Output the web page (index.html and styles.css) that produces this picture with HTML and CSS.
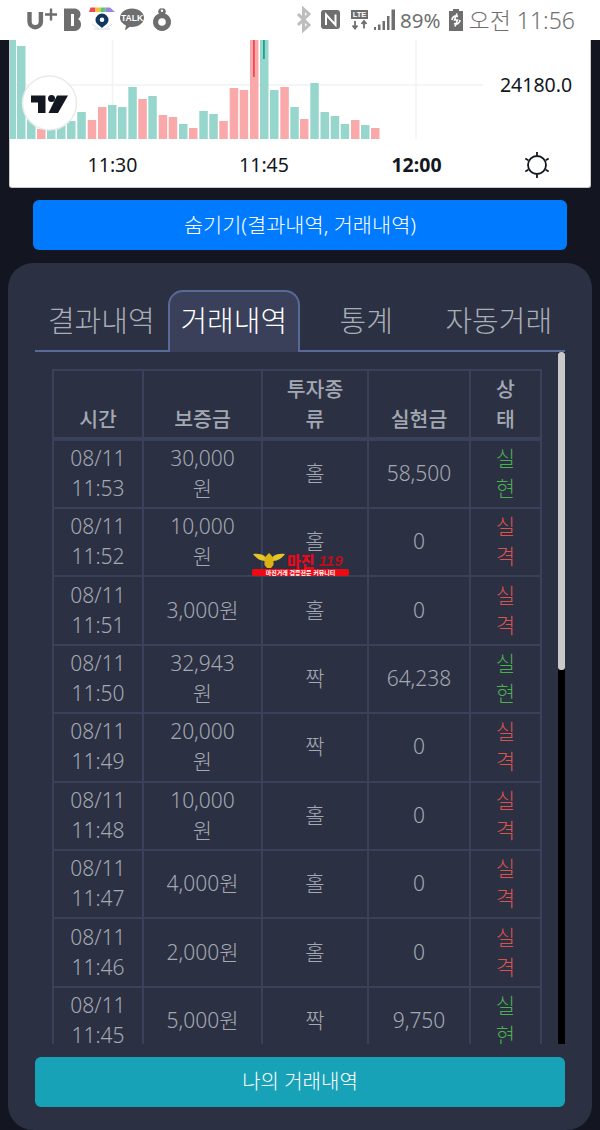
FILE: index.html
```html
<!DOCTYPE html>
<html lang="ko">
<head>
<meta charset="utf-8">
<title>거래내역</title>
<link rel="stylesheet" href="styles.css">
</head>
<body>
<div class="page">
  <header class="status">
    <div class="status-left">
      <svg class="status-icons" viewBox="0 0 180 40" width="180" height="40">
        <path class="ink-stroke" d="M29.5 12v9.5a5.7 5.7 0 0 0 11.4 0V12" />
        <path class="ink-thin" d="M45 14.5h12M51 8.500v12" />
        <path class="ink" d="M64 8.500h10c4 0 6.500 2.500 6.500 5.500 0 2.500-1 4-2.500 5 2 1 3 3 3 5.500 0 4-3 6.500-7 6.500H64z" />
        <rect class="paper" x="71" y="14" width="3" height="12" />
        <path class="rb1" d="M89 12l1.500-4.500h5V12z" />
        <rect class="rb2" x="95.500" y="7.500" width="5" height="4.500" />
        <rect class="rb3" x="100.500" y="7.500" width="5" height="4.500" />
        <path class="rb4" d="M105.500 7.500h4.500l5 4.500h-9.500z" />
        <path class="navy" d="M102 13.500a6.500 6.500 0 0 0-6.500 6.500c0 3.500 4 5.500 6.500 8 2.500-2.500 6.500-4.500 6.500-8a6.500 6.500 0 0 0-6.500-6.500z" />
        <circle class="paper" cx="102" cy="19.800" r="2.300" />
        <path class="pale-line" d="M92 24l7 5M112 24l-7 5M94 29h16" />
        <path class="ink" d="M132 8.500c6.700 0 12 4.200 12 9.300s-5.300 9.200-12 9.200c-.8 0-1.500 0-2.200-.2L125 30.500l1-5c-3.500-1.700-6-4.500-6-7.700 0-5.100 5.300-9.300 12-9.300z" />
        <text class="talk" x="132" y="21">TALK</text>
        <path class="ink" d="M159 13.500a3 3 0 0 1 2.900-5h.2a3 3 0 0 1 2.900 5 9 9 0 1 1-6 0z" />
        <circle class="paper" cx="162" cy="22" r="3.800" />
        <circle class="paper" cx="162" cy="10.800" r="1.200" />
      </svg>
    </div>
    <div class="status-right">
      <svg class="status-sys" viewBox="0 0 100 40" width="100" height="40">
        <path class="bt" d="M2 14l11 11-5.500 5V9l5.500 5L2 25" />
        <rect class="ink" x="25" y="10" width="19" height="19" rx="3" />
        <path class="nfc" d="M30 25V14.500l9.500 10.500V14.500" />
        <rect class="ink" x="55" y="10" width="17" height="9" />
        <text class="lte" x="63.500" y="17.300">LTE</text>
        <path class="ink-thin2" d="M59 21v7M56.500 25.500L59 28.500l2.500-3M68 28.500v-7M65.500 24l2.500-3 2.500 3" />
        <path class="ink" d="M78 27h2v3h-2zM82 24.500h2.500V30H82zM86.500 21H89v9h-2.500zM91 16h2.500v14H91zM95.500 9.500H99V30h-3.500z" />
      </svg>
      <span class="pct">89%</span>
      <svg class="battery" viewBox="0 0 14 22" width="14" height="22">
        <path class="ink" d="M4 0h6v2h4v20H0V2h4z" />
        <path class="bolt" d="M3 11a4 4 0 0 1 6-3.500M11 11a4 4 0 0 1-6 3.500M8 4.500L5.500 11h3L6 17.500" />
      </svg>
      <span class="clock">오전 11:56</span>
    </div>
  </header>

  <section class="chart">
    <svg class="chart-svg" viewBox="10 40 580 147" width="580" height="147">
      <path class="grid" d="M10 85H483M112.500 40V139M264 40V139M416 40V139" />
      <g class="up">
        <rect x="10" y="40" width="6" height="99" /><rect x="17" y="46" width="8.500" height="93" /><rect x="27" y="112" width="8.500" height="27" />
        <rect x="47" y="120" width="8.500" height="19" /><rect x="57" y="121" width="8.500" height="18" /><rect x="67" y="121" width="8.500" height="18" />
        <rect x="77.300" y="112" width="8.500" height="27" /><rect x="108" y="105" width="8.500" height="34" /><rect x="118" y="107" width="8.500" height="32" />
        <rect x="128.300" y="87" width="8.500" height="52" /><rect x="148.300" y="96" width="8.500" height="43" /><rect x="179" y="124" width="8.500" height="15" />
        <rect x="199.300" y="111" width="8.500" height="28" /><rect x="209.300" y="114" width="8.500" height="25" /><rect x="260" y="40" width="8.500" height="99" />
        <rect x="270" y="90" width="8.500" height="49" /><rect x="290.300" y="107" width="8.500" height="32" /><rect x="310.300" y="83" width="8.500" height="56" />
        <rect x="320.500" y="112" width="8.500" height="27" /><rect x="330.700" y="116" width="8.500" height="23" /><rect x="340.700" y="124" width="8.500" height="15" />
        <rect x="361" y="125" width="8.500" height="14" />
      </g>
      <g class="down">
        <rect x="37" y="129" width="8.500" height="10" /><rect x="87.700" y="120" width="8.500" height="19" /><rect x="98" y="107" width="8.500" height="32" />
        <rect x="138.300" y="99" width="8.500" height="40" /><rect x="158.700" y="115" width="8.500" height="24" /><rect x="168.700" y="117" width="8.500" height="22" />
        <rect x="189" y="128" width="8.500" height="11" /><rect x="219.300" y="121" width="8.500" height="18" /><rect x="229.700" y="88" width="8.500" height="51" />
        <rect x="239.700" y="90" width="8.500" height="49" /><rect x="250" y="40" width="8.500" height="99" /><rect x="280.300" y="87" width="8.500" height="52" />
        <rect x="300" y="119" width="8.500" height="20" /><rect x="351" y="120" width="8.500" height="19" /><rect x="371" y="128" width="8.500" height="11" />
      </g>
      <rect class="wick-red" x="253" y="40" width="1.800" height="37" />
      <rect class="wick-green" x="263" y="40" width="1.800" height="19" />
      <circle class="logo-disc" cx="49.500" cy="103" r="27" />
      <path class="logo-mark" d="M31 95.500h14.500V113H38V102.500H31zM57 95.500h11L58 113h-9.500z" />
      <circle class="logo-mark" cx="51.500" cy="98.500" r="3.500" />
      <text class="axis-price" x="536" y="92">24180.0</text>
      <text class="axis-time" x="112.500" y="172">11:30</text>
      <text class="axis-time" x="264" y="172">11:45</text>
      <text class="axis-time axis-strong" x="416.500" y="172">12:00</text>
      <g class="sun">
        <circle cx="537" cy="165" r="9" />
        <path d="M537 152v3.500M537 174.500v3.500M525.300 158.500l3 1.700M545.700 169.800l3 1.700M525.300 171.500l3-1.700M545.700 160.200l3-1.700" />
      </g>
    </svg>
  </section>

  <button class="btn-hide" type="button">숨기기(결과내역, 거래내역)</button>

  <main class="panel">
    <nav class="tabs">
      <a class="tab">결과내역</a>
      <a class="tab tab-active">거래내역</a>
      <a class="tab">통계</a>
      <a class="tab">자동거래</a>
    </nav>
    <div class="scroller">
      <div class="scroll-body">
        <table class="trades">
          <colgroup>
            <col class="c-time"><col class="c-dep"><col class="c-type"><col class="c-real"><col class="c-state">
          </colgroup>
          <thead>
            <tr><th>시간</th><th>보증금</th><th>투자종류</th><th>실현금</th><th>상태</th></tr>
          </thead>
          <tbody>
            <tr><td>08/11 11:53</td><td>30,000원</td><td>홀</td><td>58,500</td><td class="win">실현</td></tr>
            <tr><td>08/11 11:52</td><td>10,000원</td><td>홀</td><td>0</td><td class="lose">실격</td></tr>
            <tr><td>08/11 11:51</td><td>3,000원</td><td>홀</td><td>0</td><td class="lose">실격</td></tr>
            <tr><td>08/11 11:50</td><td>32,943원</td><td>짝</td><td>64,238</td><td class="win">실현</td></tr>
            <tr><td>08/11 11:49</td><td>20,000원</td><td>짝</td><td>0</td><td class="lose">실격</td></tr>
            <tr><td>08/11 11:48</td><td>10,000원</td><td>홀</td><td>0</td><td class="lose">실격</td></tr>
            <tr><td>08/11 11:47</td><td>4,000원</td><td>홀</td><td>0</td><td class="lose">실격</td></tr>
            <tr><td>08/11 11:46</td><td>2,000원</td><td>홀</td><td>0</td><td class="lose">실격</td></tr>
            <tr><td>08/11 11:45</td><td>5,000원</td><td>짝</td><td>9,750</td><td class="win">실현</td></tr>
          </tbody>
        </table>
      </div>
      <div class="scrollbar"><div class="thumb"></div></div>
    </div>
    <button class="btn-mine" type="button">나의 거래내역</button>
  </main>

  <div class="watermark">
    <div class="wm-top">
      <svg class="wm-eagle" viewBox="0 0 32 16" width="32" height="16">
        <path class="wm-wing" d="M0 1c5-.5 10 0 12.500 3L12 8C7 8 3 5 0 1zM32 1c-5-.5-10 0-12.500 3L20 8c5 0 9-3 12-7z" />
        <path class="wm-body" d="M16 0l2 2 2.500 3v7L18 15h-4l-2.500-3V5L14 2z" />
      </svg>
      <span class="wm-name">마진</span>
      <span class="wm-num">119</span>
    </div>
    <div class="wm-bar">마진거래 검증전문 커뮤니티</div>
  </div>
</div>
</body>
</html>
```
FILE: styles.css
```css
* { box-sizing: border-box; }
html, body { margin: 0; padding: 0; }
body {
  width: 600px;
  height: 1130px;
  overflow: hidden;
  background: #131620;
  font-family: "Noto Sans", "Noto Sans CJK KR", sans-serif;
}
.page { position: relative; width: 600px; height: 1130px; overflow: hidden; }

/* status bar */
.status {
  height: 40px;
  background: #fff;
  display: flex;
  justify-content: space-between;
  color: #6f6f6f;
}
.status-left, .status-right { display: flex; align-items: center; }
.status-icons { display: block; }
.status-right { padding-right: 25px; }
.status-sys { display: block; }
.pct { font: 400 20.500px/40px "Noto Sans", sans-serif; margin-left: 4px; }
.battery { margin-left: 8px; }
.clock { font: 300 23px/40px "Noto Sans", "Noto Sans CJK KR", sans-serif; margin-left: 6px; }
.ink { fill: #6e6e6e; }
.ink-stroke { fill: none; stroke: #6e6e6e; stroke-width: 4.4; }
.ink-thin { fill: none; stroke: #6e6e6e; stroke-width: 2.4; }
.ink-thin2 { fill: none; stroke: #6e6e6e; stroke-width: 1.8; }
.paper { fill: #fff; }
.rb1 { fill: #ea4b4b; }
.rb2 { fill: #f5c33b; }
.rb3 { fill: #5dc96a; }
.rb4 { fill: #9a84ea; }
.navy { fill: #10375f; }
.pale-line { fill: none; stroke: #d8dde2; stroke-width: 1; }
.talk { fill: #fff; font: 700 8.500px "Liberation Sans", sans-serif; text-anchor: middle; }
.lte { fill: #fff; font: 700 7.500px "Liberation Sans", sans-serif; text-anchor: middle; }
.bt { fill: none; stroke: #bdbdbd; stroke-width: 3; }
.nfc { fill: none; stroke: #fff; stroke-width: 2; }
.bolt { fill: none; stroke: #fff; stroke-width: 1.600; }

/* chart */
.chart {
  margin: 0 9px;
  height: 148px;
  background: #fff;
  border: solid #c9c9c9;
  border-width: 0 1px 1px;
  border-radius: 0 0 3px 3px;
  overflow: hidden;
}
.chart-svg { display: block; }
.grid { fill: none; stroke: #f0f3f4; stroke-width: 1.500; }
.up rect { fill: #97d6cd; }
.down rect { fill: #f9a9a9; }
.wick-red { fill: #f23645; opacity: 0.85; }
.wick-green { fill: #089981; opacity: 0.85; }
.logo-disc { fill: #fff; stroke: #e9eaea; stroke-width: 1.500; }
.logo-mark { fill: #131722; }
.axis-price { font: 400 19.500px "Noto Sans", sans-serif; fill: #131722; text-anchor: middle; }
.axis-time { font: 400 19.500px "Noto Sans", sans-serif; fill: #131722; text-anchor: middle; }
.axis-strong { font-weight: 700; }
.sun { fill: none; stroke: #131722; stroke-width: 1.800; }

/* buttons */
.btn-hide, .btn-mine {
  display: block;
  border: 0;
  color: #fff;
  font: 300 20px/50px "Noto Sans", "Noto Sans CJK KR", sans-serif;
  text-align: center;
  border-radius: 6px;
  padding: 0;
}
.btn-hide {
  width: 534px;
  height: 50px;
  margin: 12px 33px 0;
  background: #007bff;
  font-size: 20.800px;
}
.btn-mine {
  width: 530px;
  height: 50px;
  margin-top: 13px;
  background: #17a2b8;
}

/* panel */
.panel {
  margin: 13px 8px 0;
  height: 867px;
  padding: 27px 27px 0;
  background: #2b3043;
  border-radius: 25px;
}
.tabs {
  display: grid;
  grid-template-columns: repeat(4, 1fr);
  height: 62px;
  border-bottom: 2px solid #5a6a98;
}
.tab {
  display: block;
  height: 62px;
  border: 2px solid transparent;
  border-bottom: 0;
  border-radius: 15px 15px 0 0;
  color: #a9adb5;
  font: 300 29px/58px "Noto Sans", "Noto Sans CJK KR", sans-serif;
  text-align: center;
}
.tab-active {
  background: #3a4059;
  border-color: #5a6a98;
  color: #fff;
}

/* scroller */
.scroller {
  display: flex;
  height: 692px;
  overflow: hidden;
}
.scroll-body { flex: 1; padding: 17px 0 0 17px; overflow: hidden; }
.scrollbar { width: 7px; background: #000; }
.thumb { height: 318px; background: #c9c9c9; border-radius: 3px; }

.trades {
  table-layout: fixed;
  width: 488px;
  border-collapse: collapse;
  border: 2px solid #3a415b;
}
.c-time { width: 90px; }
.c-dep { width: 119px; }
.c-type { width: 106px; }
.c-real { width: 102px; }
.c-state { width: 71px; }
.trades th, .trades td {
  border: 2px solid #3a415b;
  text-align: center;
  padding: 3px 18px;
  word-break: break-all;
}
.trades th {
  height: 68px;
  vertical-align: bottom;
  color: #a3a8b2;
  font: 500 20.500px/30px "Noto Sans", "Noto Sans CJK KR", sans-serif;
  border-bottom-width: 4px;
}
.trades td {
  height: 68.400px;
  color: #a5a9b2;
  font: 300 21px/30px "Noto Sans", "Noto Sans CJK KR", sans-serif;
  vertical-align: middle;
  padding-top: 2px;
  padding-bottom: 4px;
}
.trades td:first-child, .trades td:nth-child(4) { padding-left: 12px; padding-right: 12px; }
.trades td.win { color: #4caf50; }
.trades td.lose { color: #d9534f; }

/* watermark */
.watermark {
  position: absolute;
  left: 252px;
  top: 553px;
  width: 97px;
}
.wm-top { display: flex; align-items: center; height: 16px; }
.wm-eagle { flex: none; margin-left: 1px; }
.wm-wing { fill: #e3c42a; }
.wm-body { fill: #d9b414; }
.wm-name { font: 900 15px/14px "Noto Sans CJK KR", sans-serif; color: #e8091b; margin-left: 2px; }
.wm-num { font: italic 900 15px/14px "Liberation Sans", sans-serif; color: #b8101a; margin-left: 4px; }
.wm-bar {
  height: 7px;
  background: #ee0a14;
  border-radius: 2px;
  color: #fff;
  font: 700 6px/7px "Noto Sans CJK KR", sans-serif;
  text-align: center;
  white-space: nowrap;
  overflow: hidden;
}
```
